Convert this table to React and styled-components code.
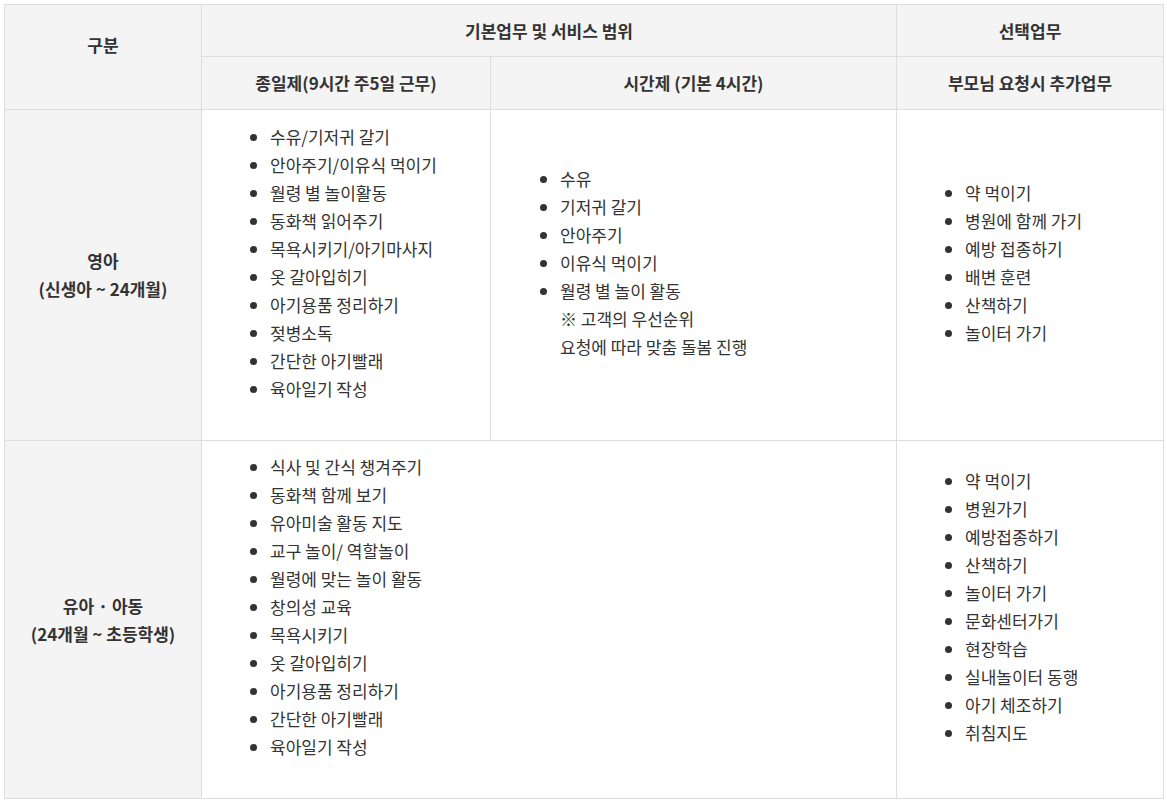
import React from "react";
import styled, { createGlobalStyle } from "styled-components";

const Global = createGlobalStyle`
  html, body { margin: 0; padding: 0; background: #fff; }
  body { font-family: "Noto Sans CJK KR", "Noto Sans", sans-serif; color: #333; }
`;

const Wrap = styled.div`
  padding: 4px;
`;

const Table = styled.table`
  width: 1159px;
  border-collapse: collapse;
  table-layout: fixed;
  border: 1px solid #ddd;
  font-size: 17px;
`;

const Row = styled.tr`
  height: ${(p) => p.$h}px;
`;

const Th = styled.th`
  background: #f4f4f4;
  border: 1px solid #ddd;
  font-weight: 700;
  font-size: 17px;
  color: #333;
  text-align: center;
  vertical-align: middle;
  padding: ${(p) => (p.$lift ? "0 0 25px" : "0")};
  line-height: 28px;
`;

const Td = styled.td`
  border: 1px solid #ddd;
  vertical-align: middle;
  padding: 0 0 0 ${(p) => p.$pl || 28}px;
  line-height: 28px;
  color: #333;
`;

const List = styled.ul`
  margin: 0 0 25px;
  padding: 0 0 0 40px;
  list-style: disc;
`;

const Item = styled.li`
  line-height: 28px;
`;

const Note = styled.div`
  line-height: 28px;
`;

const col1a = ["수유/기저귀 갈기", "안아주기/이유식 먹이기", "월령 별 놀이활동", "동화책 읽어주기", "목욕시키기/아기마사지", "옷 갈아입히기", "아기용품 정리하기", "젖병소독", "간단한 아기빨래", "육아일기 작성"];
const col2a = ["수유", "기저귀 갈기", "안아주기", "이유식 먹이기", "월령 별 놀이 활동"];
const col3a = ["약 먹이기", "병원에 함께 가기", "예방 접종하기", "배변 훈련", "산책하기", "놀이터 가기"];
const col1b = ["식사 및 간식 챙겨주기", "동화책 함께 보기", "유아미술 활동 지도", "교구 놀이/ 역할놀이", "월령에 맞는 놀이 활동", "창의성 교육", "목욕시키기", "옷 갈아입히기", "아기용품 정리하기", "간단한 아기빨래", "육아일기 작성"];
const col3b = ["약 먹이기", "병원가기", "예방접종하기", "산책하기", "놀이터 가기", "문화센터가기", "현장학습", "실내놀이터 동행", "아기 체조하기", "취침지도"];

const Bullets = ({ items, children }) => (
  <List>
    {items.map((t) => (
      <Item key={t}>{t}</Item>
    ))}
    {children}
  </List>
);

export default function App() {
  return (
    <Wrap>
      <Global />
      <Table>
        <colgroup>
          <col style={{ width: 197 }} />
          <col style={{ width: 289 }} />
          <col style={{ width: 406 }} />
          <col style={{ width: 267 }} />
        </colgroup>
        <thead>
          <Row $h={52}>
            <Th rowSpan={2} $lift>구분</Th>
            <Th colSpan={2}>기본업무 및 서비스 범위</Th>
            <Th>선택업무</Th>
          </Row>
          <Row $h={53}>
            <Th>종일제(9시간 주5일 근무)</Th>
            <Th>시간제 (기본 4시간)</Th>
            <Th>부모님 요청시 추가업무</Th>
          </Row>
        </thead>
        <tbody>
          <Row $h={331}>
            <Th>
              영아
              <br />
              (신생아 ~ 24개월)
            </Th>
            <Td>
              <Bullets items={col1a} />
            </Td>
            <Td $pl={29}>
              <Bullets items={col2a}>
                <Note>※ 고객의 우선순위</Note>
                <Note>요청에 따라 맞춤 돌봄 진행</Note>
              </Bullets>
            </Td>
            <Td>
              <Bullets items={col3a} />
            </Td>
          </Row>
          <Row $h={358}>
            <Th>
              유아 · 아동
              <br />
              (24개월 ~ 초등학생)
            </Th>
            <Td colSpan={2}>
              <Bullets items={col1b} />
            </Td>
            <Td>
              <Bullets items={col3b} />
            </Td>
          </Row>
        </tbody>
      </Table>
    </Wrap>
  );
}
